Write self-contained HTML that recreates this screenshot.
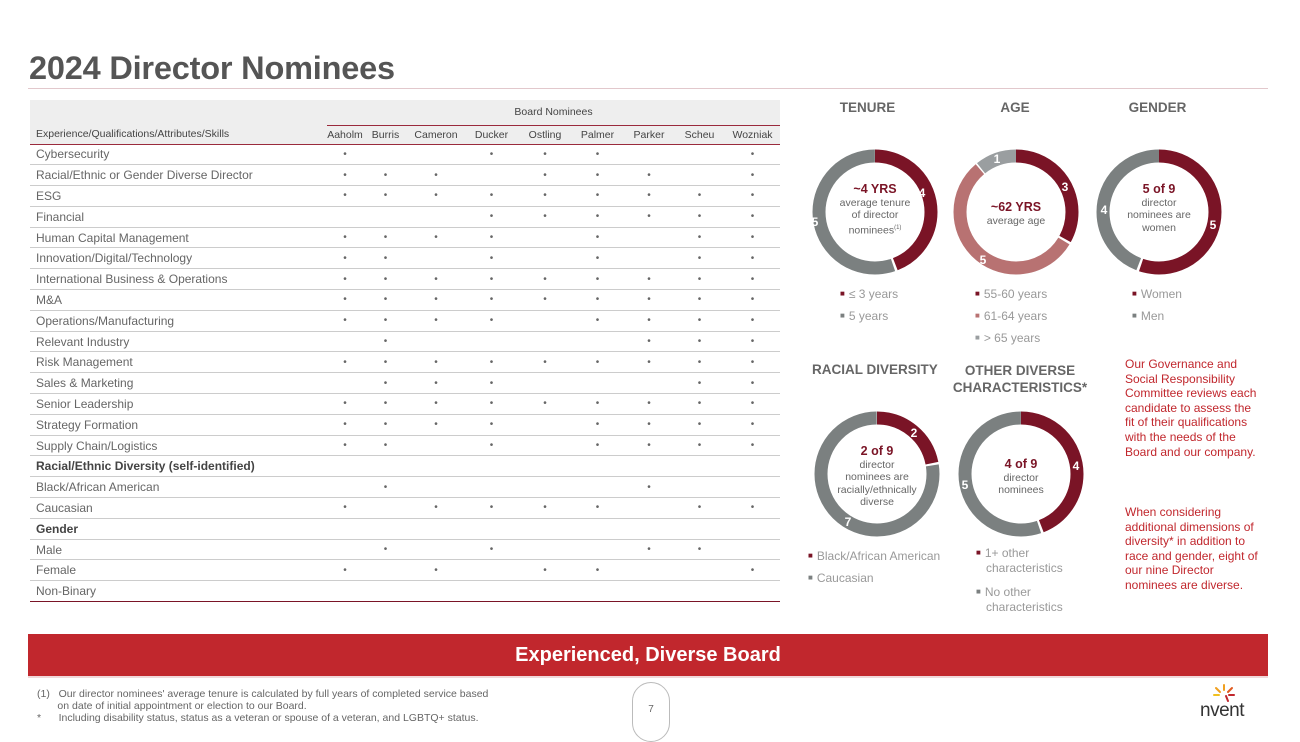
<!DOCTYPE html>
<html><head><meta charset="utf-8"><style>
*{margin:0;padding:0;box-sizing:border-box}
body{width:1300px;height:731px;background:#fff;font-family:"Liberation Sans",sans-serif;position:relative;overflow:hidden;color:#555}
.a{position:absolute}
h1{position:absolute;left:29px;top:50px;font-size:32.5px;font-weight:bold;color:#555;letter-spacing:-0.2px}
.rule{left:28px;top:88px;width:1240px;height:1px;background:#e2c8cc}
table{position:absolute;left:30px;top:100px;width:750px;border-collapse:collapse;font-size:12px;color:#666;table-layout:fixed}
td{height:20.8px;border-bottom:1px solid #ccc;padding-left:6px;white-space:nowrap}
td.d{text-align:center;padding:0;font-size:10px}
tr.h td{background:#eee;border-bottom:none;font-size:10.5px;color:#444;height:25px}
tr.h2 td{background:#eee;font-size:10.5px;color:#444;height:19px;border-bottom:1px solid #9a2a3c;text-align:center;padding:0}
tr.b td{font-weight:bold;color:#444}
tr.last td{border-bottom:1px solid #7a1426}
.ti{font-size:13.5px;font-weight:bold;color:#666;text-align:center}
.leg{font-size:12px;color:#999;line-height:22px}
.leg span{font-size:8px;vertical-align:2px;margin-right:4px}
.c{text-align:center;font-size:10.5px;color:#666;line-height:12.5px}
.c b{color:#7a1426;font-size:12.5px}
.side{font-size:12px;color:#c1272d;line-height:14.6px}
</style></head><body>
<h1>2024 Director Nominees</h1>
<div class="a rule"></div>
<table>
<colgroup><col style="width:297px"><col style="width:36px"><col style="width:45px"><col style="width:56px"><col style="width:55px"><col style="width:52px"><col style="width:53px"><col style="width:50px"><col style="width:51px"><col style="width:55px"></colgroup>
<tr class="h"><td></td><td colspan="9" style="text-align:center;padding:0;border-bottom:1px solid #9a2a3c">Board Nominees</td></tr>
<tr class="h2"><td style="text-align:left;padding-left:6px">Experience/Qualifications/Attributes/Skills</td><td>Aaholm</td><td>Burris</td><td>Cameron</td><td>Ducker</td><td>Ostling</td><td>Palmer</td><td>Parker</td><td>Scheu</td><td>Wozniak</td></tr>
<tr><td>Cybersecurity</td><td class="d">•</td><td class="d"></td><td class="d"></td><td class="d">•</td><td class="d">•</td><td class="d">•</td><td class="d"></td><td class="d"></td><td class="d">•</td></tr>
<tr><td>Racial/Ethnic or Gender Diverse Director</td><td class="d">•</td><td class="d">•</td><td class="d">•</td><td class="d"></td><td class="d">•</td><td class="d">•</td><td class="d">•</td><td class="d"></td><td class="d">•</td></tr>
<tr><td>ESG</td><td class="d">•</td><td class="d">•</td><td class="d">•</td><td class="d">•</td><td class="d">•</td><td class="d">•</td><td class="d">•</td><td class="d">•</td><td class="d">•</td></tr>
<tr><td>Financial</td><td class="d"></td><td class="d"></td><td class="d"></td><td class="d">•</td><td class="d">•</td><td class="d">•</td><td class="d">•</td><td class="d">•</td><td class="d">•</td></tr>
<tr><td>Human Capital Management</td><td class="d">•</td><td class="d">•</td><td class="d">•</td><td class="d">•</td><td class="d"></td><td class="d">•</td><td class="d"></td><td class="d">•</td><td class="d">•</td></tr>
<tr><td>Innovation/Digital/Technology</td><td class="d">•</td><td class="d">•</td><td class="d"></td><td class="d">•</td><td class="d"></td><td class="d">•</td><td class="d"></td><td class="d">•</td><td class="d">•</td></tr>
<tr><td>International Business &amp; Operations</td><td class="d">•</td><td class="d">•</td><td class="d">•</td><td class="d">•</td><td class="d">•</td><td class="d">•</td><td class="d">•</td><td class="d">•</td><td class="d">•</td></tr>
<tr><td>M&amp;A</td><td class="d">•</td><td class="d">•</td><td class="d">•</td><td class="d">•</td><td class="d">•</td><td class="d">•</td><td class="d">•</td><td class="d">•</td><td class="d">•</td></tr>
<tr><td>Operations/Manufacturing</td><td class="d">•</td><td class="d">•</td><td class="d">•</td><td class="d">•</td><td class="d"></td><td class="d">•</td><td class="d">•</td><td class="d">•</td><td class="d">•</td></tr>
<tr><td>Relevant Industry</td><td class="d"></td><td class="d">•</td><td class="d"></td><td class="d"></td><td class="d"></td><td class="d"></td><td class="d">•</td><td class="d">•</td><td class="d">•</td></tr>
<tr><td>Risk Management</td><td class="d">•</td><td class="d">•</td><td class="d">•</td><td class="d">•</td><td class="d">•</td><td class="d">•</td><td class="d">•</td><td class="d">•</td><td class="d">•</td></tr>
<tr><td>Sales &amp; Marketing</td><td class="d"></td><td class="d">•</td><td class="d">•</td><td class="d">•</td><td class="d"></td><td class="d"></td><td class="d"></td><td class="d">•</td><td class="d">•</td></tr>
<tr><td>Senior Leadership</td><td class="d">•</td><td class="d">•</td><td class="d">•</td><td class="d">•</td><td class="d">•</td><td class="d">•</td><td class="d">•</td><td class="d">•</td><td class="d">•</td></tr>
<tr><td>Strategy Formation</td><td class="d">•</td><td class="d">•</td><td class="d">•</td><td class="d">•</td><td class="d"></td><td class="d">•</td><td class="d">•</td><td class="d">•</td><td class="d">•</td></tr>
<tr><td>Supply Chain/Logistics</td><td class="d">•</td><td class="d">•</td><td class="d"></td><td class="d">•</td><td class="d"></td><td class="d">•</td><td class="d">•</td><td class="d">•</td><td class="d">•</td></tr>
<tr class="b"><td>Racial/Ethnic Diversity (self-identified)</td><td colspan="9"></td></tr>
<tr><td>Black/African American</td><td class="d"></td><td class="d">•</td><td class="d"></td><td class="d"></td><td class="d"></td><td class="d"></td><td class="d">•</td><td class="d"></td><td class="d"></td></tr>
<tr><td>Caucasian</td><td class="d">•</td><td class="d"></td><td class="d">•</td><td class="d">•</td><td class="d">•</td><td class="d">•</td><td class="d"></td><td class="d">•</td><td class="d">•</td></tr>
<tr class="b"><td>Gender</td><td colspan="9"></td></tr>
<tr><td>Male</td><td class="d"></td><td class="d">•</td><td class="d"></td><td class="d">•</td><td class="d"></td><td class="d"></td><td class="d">•</td><td class="d">•</td><td class="d"></td></tr>
<tr><td>Female</td><td class="d">•</td><td class="d"></td><td class="d">•</td><td class="d"></td><td class="d">•</td><td class="d">•</td><td class="d"></td><td class="d"></td><td class="d">•</td></tr>
<tr class="last"><td>Non-Binary</td><td colspan="9"></td></tr>
</table>

<div class="a ti" style="left:820px;top:100px;width:95px">TENURE</div>
<div class="a ti" style="left:975px;top:100px;width:80px">AGE</div>
<div class="a ti" style="left:1115px;top:100px;width:85px">GENDER</div>

<svg class="a" style="left:0;top:0" width="1300" height="731">
<g fill="none" stroke-width="13">
<g transform="translate(875,212) rotate(-90)">
<circle r="56" stroke="#7a1426" stroke-dasharray="155 400" stroke-dashoffset="0"/>
<circle r="56" stroke="#7b8080" stroke-dasharray="194 400" stroke-dashoffset="-157.4"/></g>
<g transform="translate(1016,212) rotate(-90)">
<circle r="56" stroke="#7a1426" stroke-dasharray="116 400"/>
<circle r="56" stroke="#b87272" stroke-dasharray="194 400" stroke-dashoffset="-118.3"/>
<circle r="56" stroke="#9a9ea0" stroke-dasharray="38 400" stroke-dashoffset="-313.8"/></g>
<g transform="translate(1159,212) rotate(-90)">
<circle r="56" stroke="#7a1426" stroke-dasharray="194 400"/>
<circle r="56" stroke="#7b8080" stroke-dasharray="155 400" stroke-dashoffset="-196.5"/></g>
<g transform="translate(877,474) rotate(-90)">
<circle r="56" stroke="#7a1426" stroke-dasharray="77 400"/>
<circle r="56" stroke="#7b8080" stroke-dasharray="272 400" stroke-dashoffset="-79.2"/></g>
<g transform="translate(1021,474) rotate(-90)">
<circle r="56" stroke="#7a1426" stroke-dasharray="155 400"/>
<circle r="56" stroke="#7b8080" stroke-dasharray="194 400" stroke-dashoffset="-157.4"/></g>
</g>
<g fill="#fff" font-size="12" font-weight="bold" font-family="Liberation Sans" text-anchor="middle">
<text x="922" y="197">4</text><text x="815" y="226">5</text>
<text x="1065" y="191">3</text><text x="983" y="264">5</text><text x="997" y="163">1</text>
<text x="1213" y="229">5</text><text x="1104" y="214">4</text>
<text x="914" y="437">2</text><text x="848" y="526">7</text>
<text x="1076" y="470">4</text><text x="965" y="489">5</text>
</g>
</svg>

<div class="a c" style="left:815px;top:183px;width:120px"><b>~4 YRS</b><br>average tenure<br>of director<br>nominees<sup style="font-size:6px">(1)</sup></div>
<div class="a c" style="left:966px;top:201px;width:100px"><b>~62 YRS</b><br>average age</div>
<div class="a c" style="left:1109px;top:183px;width:100px"><b>5 of 9</b><br>director<br>nominees are<br>women</div>
<div class="a c" style="left:822px;top:445px;width:110px"><b>2 of 9</b><br>director<br>nominees are<br>racially/ethnically<br>diverse</div>
<div class="a c" style="left:971px;top:458px;width:100px"><b>4 of 9</b><br>director<br>nominees</div>

<div class="a leg" style="left:840px;top:283px"><span style="color:#7a1426">■</span>≤ 3 years<br><span style="color:#7b8080">■</span>5 years</div>
<div class="a leg" style="left:975px;top:283px"><span style="color:#7a1426">■</span>55-60 years<br><span style="color:#b87272">■</span>61-64 years<br><span style="color:#9a9ea0">■</span>&gt; 65 years</div>
<div class="a leg" style="left:1132px;top:283px"><span style="color:#7a1426">■</span>Women<br><span style="color:#7b8080">■</span>Men</div>

<div class="a ti" style="left:812px;top:362px;width:130px;text-align:left">RACIAL DIVERSITY</div>
<div class="a ti" style="left:950px;top:362px;width:140px;line-height:17px">OTHER DIVERSE<br>CHARACTERISTICS*</div>

<div class="a leg" style="left:808px;top:545px"><span style="color:#7a1426">■</span>Black/African American<br><span style="color:#7b8080">■</span>Caucasian</div>
<div class="a leg" style="left:976px;top:545px;line-height:15px"><span style="color:#7a1426">■</span>1+ other<br>&nbsp;&nbsp;&nbsp;characteristics<br><div style="height:8px"></div><span style="color:#7b8080">■</span>No other<br>&nbsp;&nbsp;&nbsp;characteristics</div>

<div class="a side" style="left:1125px;top:357px;width:132px">Our Governance and Social Responsibility Committee reviews each candidate to assess the fit of their qualifications with the needs of the Board and our company.</div>
<div class="a side" style="left:1125px;top:505px;width:136px">When considering additional dimensions of diversity* in addition to race and gender, eight of our nine Director nominees are diverse.</div>

<div class="a" style="left:28px;top:634px;width:1240px;height:42px;background:#c1272d;color:#fff;font-size:20px;font-weight:bold;text-align:center;line-height:42px">Experienced, Diverse Board</div>
<div class="a" style="left:28px;top:676px;width:1240px;height:2px;background:#f0d8da"></div>

<div class="a" style="left:37px;top:688px;font-size:10.5px;color:#666;line-height:12px">
<div>(1)&nbsp;&nbsp;&nbsp;Our director nominees' average tenure is calculated by full years of completed service based<br>&nbsp;&nbsp;&nbsp;&nbsp;&nbsp;&nbsp;&nbsp;on date of initial appointment or election to our Board.</div>
<div>*&nbsp;&nbsp;&nbsp;&nbsp;&nbsp;&nbsp;Including disability status, status as a veteran or spouse of a veteran, and LGBTQ+ status.</div></div>
<div class="a" style="left:632px;top:682px;width:38px;height:60px;border:1px solid #bbb;border-radius:19px;font-size:10px;color:#666;text-align:center;padding-top:21px">7</div>
<div class="a" style="left:1200px;top:700px;font-size:19px;color:#333;letter-spacing:-0.5px">nvent</div>
<svg class="a" style="left:1212px;top:684px" width="24" height="18"><g stroke-width="2" stroke-linecap="round"><line x1="12" y1="1" x2="12" y2="6" stroke="#f0a020"/><line x1="4" y1="4" x2="8" y2="8" stroke="#f0a020"/><line x1="20" y1="4" x2="16" y2="8" stroke="#e05a20"/><line x1="2" y1="11" x2="7" y2="11" stroke="#f0c020"/><line x1="22" y1="11" x2="17" y2="11" stroke="#c1272d"/><line x1="14" y1="12" x2="16" y2="17" stroke="#c1272d"/></g></svg>
</body></html>
